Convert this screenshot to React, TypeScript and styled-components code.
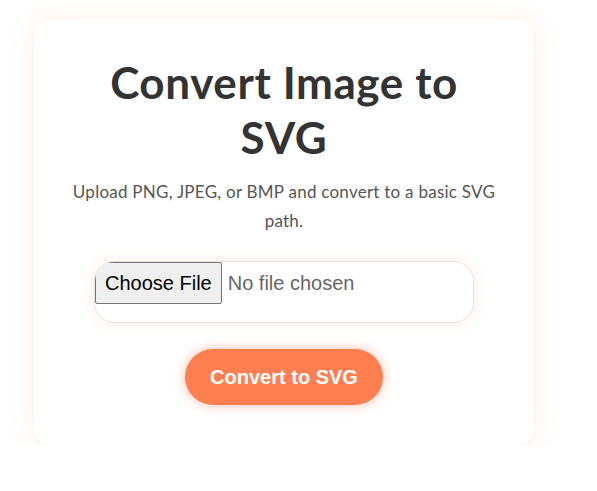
import React from "react";
import styled, { createGlobalStyle } from "styled-components";

const Global = createGlobalStyle`
  html, body { margin: 0; padding: 0; background: #ffffff; }
  body { font-family: Lato, "Open Sans", sans-serif; }
`;

const Page = styled.div`
  padding: 20px 0 0 34px;
`;

const Card = styled.div`
  width: 500px;
  box-sizing: border-box;
  background: #ffffff;
  border-radius: 18px;
  box-shadow: 0 0 24px rgba(255, 150, 90, 0.17);
  padding: 35px 30px 40px;
  display: flex;
  flex-direction: column;
  align-items: center;
  text-align: center;
`;

const Title = styled.h1`
  margin: 0;
  font-family: Lato, sans-serif;
  font-weight: 700;
  font-size: 44px;
  line-height: 55px;
  letter-spacing: 0.6px;
  color: #333333;
  max-width: 380px;
`;

const Subtitle = styled.p`
  margin: 12px 0 0;
  font-family: Lato, sans-serif;
  font-size: 17px;
  line-height: 29px;
  letter-spacing: 0.25px;
  color: #555555;
  max-width: 436px;
`;

const FileInput = styled.input`
  margin-top: 26px;
  width: 380px;
  height: 62px;
  box-sizing: border-box;
  padding: 0;
  border: 1px solid #e3e3e3;
  border-radius: 20px;
  background: #ffffff;
  box-shadow: 0 0 14px rgba(255, 160, 100, 0.18);
  font-family: "Liberation Sans", Arial, sans-serif;
  font-size: 20px;
  color: #666666;
  text-align: left;
  overflow: hidden;

  &::file-selector-button {
    margin: 0 6px 0 0;
    height: 42px;
    padding: 0 9px;
    font-family: "Liberation Sans", Arial, sans-serif;
    font-size: 20px;
    color: #000000;
    background: #efefef;
    border: 1px solid #767676;
    border-radius: 2px;
  }
`;

const ConvertButton = styled.button`
  margin-top: 26px;
  height: 56px;
  padding: 0 25px;
  border: none;
  border-radius: 28px;
  background: #ff7f50;
  color: #ffffff;
  font-family: "Liberation Sans", Arial, sans-serif;
  font-weight: 700;
  font-size: 20px;
  box-shadow: 0 0 12px rgba(255, 110, 70, 0.45);
  cursor: pointer;
`;

export default function App() {
  return (
    <>
      <Global />
      <Page>
        <Card>
          <Title>Convert Image to SVG</Title>
          <Subtitle>Upload PNG, JPEG, or BMP and convert to a basic SVG path.</Subtitle>
          <FileInput type="file" accept="image/png,image/jpeg,image/bmp" />
          <ConvertButton>Convert to SVG</ConvertButton>
        </Card>
      </Page>
    </>
  );
}
